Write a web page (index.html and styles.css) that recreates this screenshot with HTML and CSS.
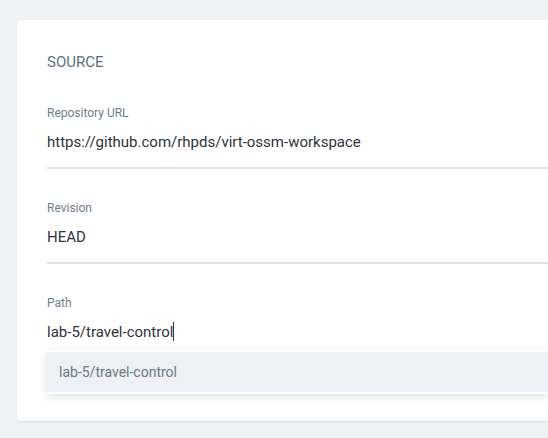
FILE: index.html
```html
<!DOCTYPE html>
<html>
<head>
<meta charset="utf-8">
<link rel="stylesheet" href="styles.css">
</head>
<body>
<div class="page">
  <section class="card">
    <h2 class="card-title">SOURCE</h2>
    <div class="field">
      <label class="field-label">Repository URL</label>
      <div class="field-input">https://github.com/rhpds/virt-ossm-workspace</div>
    </div>
    <div class="field">
      <label class="field-label">Revision</label>
      <div class="field-input">HEAD</div>
    </div>
    <div class="field field-open">
      <label class="field-label">Path</label>
      <div class="field-input field-focus">lab-5/travel-control<span class="caret"></span></div>
      <div class="dropdown">
        <div class="dropdown-item">lab-5/travel-control</div>
      </div>
    </div>
  </section>
</div>
</body>
</html>
```

FILE: styles.css
```css
html, body {
  margin: 0;
  padding: 0;
}
body {
  background: #eef2f5;
  font-family: Roboto, "Liberation Sans", sans-serif;
  overflow: hidden;
  width: 548px;
  height: 438px;
}
.page {
  padding: 20px 0 0 17px;
}
.card {
  background: #ffffff;
  border-radius: 4px 0 0 4px;
  box-shadow: 0 1px 2px rgba(40, 60, 80, 0.12);
  padding: 32px 0 27px 30px;
}
.card-title {
  margin: 0 0 33px 0;
  font-size: 15px;
  line-height: 20px;
  font-weight: 400;
  color: #5f7081;
}
.field {
  margin-bottom: 31px;
}
.field-open {
  margin-bottom: 0;
}
.field-label {
  display: block;
  font-size: 12px;
  line-height: 16px;
  color: #6d7d8d;
  margin-bottom: 9px;
}
.field-input {
  font-size: 15px;
  line-height: 24px;
  color: #2e333d;
  padding-bottom: 13px;
  border-bottom: 2px solid #dfe4ea;
}
.field-focus {
  border-bottom: none;
  padding-bottom: 0;
}
.caret {
  display: inline-block;
  width: 1px;
  height: 19px;
  background: #2e333d;
  vertical-align: -4px;
}
.dropdown {
  margin-top: 6px;
  background: #ffffff;
  padding: 2px 0;
  box-shadow: 0 2px 8px rgba(40, 60, 80, 0.16);
}
.dropdown-item {
  background: #edf1f5;
  font-size: 14px;
  line-height: 40px;
  padding-left: 12px;
  color: #697a8b;
}
```
